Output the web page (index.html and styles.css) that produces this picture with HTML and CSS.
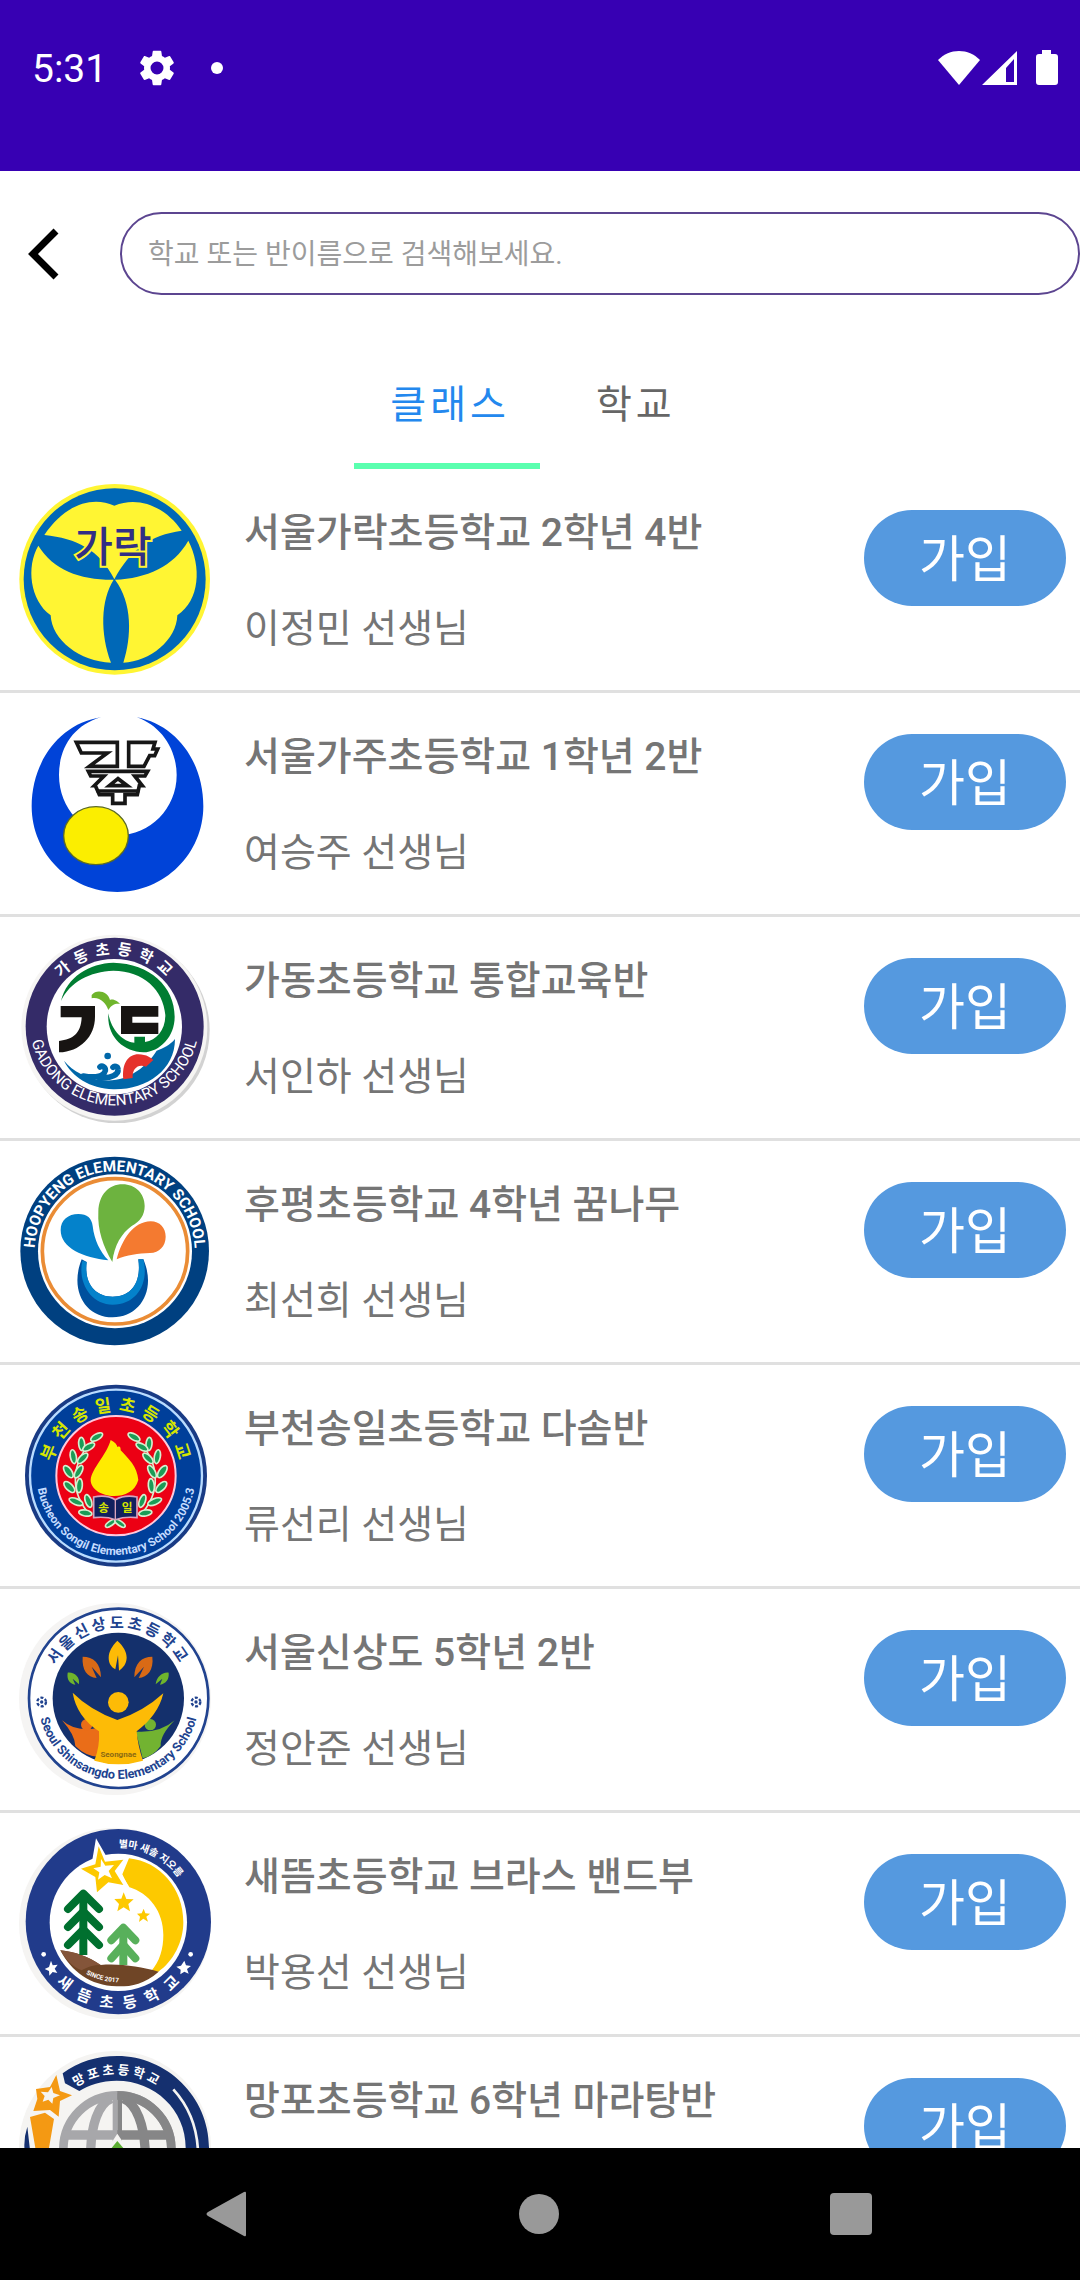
FILE: index.html
```html
<!DOCTYPE html>
<html lang="ko">
<head>
<meta charset="utf-8">
<meta name="viewport" content="width=device-width, initial-scale=1">
<title>클래스 검색</title>
<link rel="stylesheet" href="styles.css">
</head>
<body class="app">
<header class="status">
  <div class="status-group">
    <span class="clock">5:31</span>
    <svg class="gear" viewBox="2 2 20 20" aria-hidden="true"><path d="M19.14 12.94c.04-.3.06-.61.06-.94 0-.32-.02-.64-.07-.94l2.03-1.58a.49.49 0 0 0 .12-.61l-1.92-3.32a.488.488 0 0 0-.59-.22l-2.39.96c-.5-.38-1.03-.7-1.62-.94l-.36-2.54a.484.484 0 0 0-.48-.41h-3.84c-.24 0-.43.17-.47.41l-.36 2.54c-.59.24-1.13.57-1.62.94l-2.39-.96c-.22-.08-.47 0-.59.22L2.74 8.87c-.12.21-.08.47.12.61l2.03 1.58c-.05.3-.09.63-.09.94s.02.64.07.94l-2.03 1.58a.49.49 0 0 0-.12.61l1.92 3.32c.12.22.37.29.59.22l2.39-.96c.5.38 1.03.7 1.62.94l.36 2.54c.05.24.24.41.48.41h3.84c.24 0 .44-.17.47-.41l.36-2.54c.59-.24 1.13-.56 1.62-.94l2.39.96c.22.08.47 0 .59-.22l1.92-3.32c.12-.22.07-.47-.12-.61l-2.01-1.58zM12 15.6A3.6 3.6 0 1 1 12 8.400a3.600 3.600 0 0 1 0 7.200z"/></svg>
    <span class="dot"></span>
  </div>
  <div class="status-group status-right">
    <svg class="wifi" viewBox="0 0 42 36" aria-hidden="true"><path d="M21 35 0 10C6 4 13 1 21 1s15 3 21 9z"/></svg>
    <svg class="signal" viewBox="0 0 36 36" aria-hidden="true"><path fill-rule="evenodd" d="M35 1v34H0zM32 9 24 18v14h8z"/></svg>
    <svg class="battery" viewBox="0 0 22 36" aria-hidden="true"><path d="M6 0h9v4h4q3 0 3 3v25q0 3-3 3H3q-3 0-3-3V7q0-3 3-3h3z"/></svg>
  </div>
</header>

<form class="search" role="search">
  <button class="back" type="button" aria-label="뒤로"><svg viewBox="0 0 32 52" aria-hidden="true"><path d="M28 3 5 26l23 23"/></svg></button>
  <input class="search-box" type="text" aria-label="검색" placeholder="학교 또는 반이름으로 검색해보세요.">
</form>

<nav class="tabs" role="tablist">
  <button class="tab tab-on" type="button" role="tab" aria-selected="true">클래스</button>
  <button class="tab" type="button" role="tab" aria-selected="false">학교</button>
</nav>

<main class="list">
  <article class="row">
    <svg class="logo" viewBox="57 39 576 576" aria-hidden="true">
      <circle cx="344" cy="328" r="286" fill="#fff533"/>
      <circle cx="344" cy="328" r="273" fill="#0068b7"/>
      <g fill="#fff533">
        <path d="M133 195C190 110 270 75 343 107C420 75 500 115 545 182C450 195 390 240 343 328C300 240 230 205 133 195Z"/>
        <path d="M115 227C160 300 240 330 341 329C302 390 300 490 333 578C240 575 155 510 152 436C90 390 78 290 115 227Z"/>
        <path d="M565 212C520 290 440 325 345 329C398 400 395 500 370 578C450 575 530 510 532 436C600 390 605 290 565 212Z"/>
      </g>
      <text class="e-name" x="339" y="276">가락</text>
    </svg>
    <div class="info"><h2 class="title">서울가락초등학교 2학년 4반</h2><p class="teacher">이정민 선생님</p></div>
    <button class="join" type="button">가입</button>
  </article>

  <article class="row">
    <svg class="logo" viewBox="57 36 576 576" aria-hidden="true">
      <path fill="#0043d8" d="M303 67C180 85 95 200 95 334C95 476 210 591 352 591C494 591 610 476 610 334C610 200 530 90 410 67C480 90 530 160 530 240C530 340 450 421 354 421C250 421 177 340 177 240C177 160 220 90 303 67Z"/>
      <ellipse cx="288" cy="422" rx="97" ry="87" fill="#fbee00" stroke="#5c6b25" stroke-width="4"/>
      <g fill="#fff" stroke="#161616" stroke-width="11">
        <path d="M229 142H352V214H268L322 174H244Z"/>
        <path d="M386 142H465L459 162H473L464 182H449L432 214H386Z"/>
        <path d="M265 229H443L435 243H404L427 272H418L412 299H375V325H338V299H298L286 272H283L312 243H272Z"/>
        <path d="M328 272 354 251 382 272ZM290 288H418" />
      </g>
    </svg>
    <div class="info"><h2 class="title">서울가주초등학교 1학년 2반</h2><p class="teacher">여승주 선생님</p></div>
    <button class="join" type="button">가입</button>
  </article>

  <article class="row">
    <svg class="logo" viewBox="57 33 576 576" aria-hidden="true">
      <circle cx="350" cy="331" r="279" fill="#d2d2d2"/>
      <circle cx="343" cy="323" r="279" fill="#f6f5f3"/>
      <circle cx="344" cy="320" r="267" fill="#342b68"/>
      <circle cx="343" cy="320" r="203" fill="#fff"/>
      <path id="arc-gd-top" fill="none" d="M127 320A216 216 0 0 1 559 320"/>
      <path id="arc-gd-bottom" fill="none" d="M87 300A256 256 0 0 0 599 300"/>
      <text class="e-text e-46 e-bold e-wide-20 e-white"><textPath href="#arc-gd-top" startOffset="51%">가동초등학교</textPath></text>
      <text class="e-text e-46 e-white"><textPath href="#arc-gd-bottom" startOffset="50%">GADONG ELEMENTARY SCHOOL</textPath></text>
      <path fill="#007d32" d="M183 243C200 170 270 130 340 128C450 130 524 200 524 290C524 350 480 395 430 397C370 395 320 350 325 280C335 340 380 368 403 368V350H435V366C470 360 496 330 496 285C490 210 430 152 340 152C270 155 210 185 183 243Z"/>
      <path fill="#6fb52c" d="M275 225C290 205 325 215 330 240C340 235 355 245 360 252C345 250 335 255 325 270C318 250 300 230 275 235Z"/>
      <path fill="#171412" d="M182 258H285V290C285 350 240 395 177 397V363C220 358 243 340 245 292H182ZM363 258H475V290H397V308H475V342H363Z"/>
      <path fill="#0067a9" d="M525 357C525 450 440 510 340 508C270 505 215 470 192 422C220 455 258 474 305 480C380 490 440 440 470 392C490 385 510 375 525 357Z"/>
      <path fill="none" stroke="#0067a9" stroke-width="17" stroke-linecap="round" d="M250 468C290 475 312 468 316 452C317 440 306 436 300 441M296 472C335 478 356 462 354 448C353 438 343 437 339 442"/>
      <path fill="#e5322c" d="M370 478C365 430 385 403 415 403C440 403 455 415 460 420L438 440C415 430 396 445 398 474Z"/>
      <circle cx="323" cy="408" r="10" fill="#0067a9"/>
    </svg>
    <div class="info"><h2 class="title">가동초등학교 통합교육반</h2><p class="teacher">서인하 선생님</p></div>
    <button class="join" type="button">가입</button>
  </article>

  <article class="row">
    <svg class="logo" viewBox="57 45 576 576" aria-hidden="true">
      <circle cx="344" cy="333" r="283" fill="#004080"/>
      <circle cx="345" cy="334" r="231" fill="#fff"/>
      <circle cx="345" cy="334" r="218" fill="none" stroke="#ea8c35" stroke-width="11"/>
      <path id="arc-hp" fill="none" d="M104 390V334A240 240 0 0 1 584 334V390"/>
      <text class="e-text e-46 e-bold e-white"><textPath href="#arc-hp" startOffset="50%">HOOPYENG ELEMENTARY SCHOOL</textPath></text>
      <path fill="#6db33f" d="M337 366C310 320 292 270 295 215C297 165 325 133 368 133C405 133 434 160 434 198C434 225 420 245 395 258C365 280 343 315 337 366Z"/>
      <path fill="#0482cb" d="M325 361C250 352 182 325 182 270C182 240 205 222 235 222C262 222 275 235 278 258C283 300 300 335 325 361Z"/>
      <path fill="#f47a30" d="M350 358C365 300 400 245 452 244C480 244 497 264 497 290C497 318 478 338 450 339C415 340 380 345 350 358Z"/>
      <path fill="#00509d" d="M245 358L260 366C252 430 285 470 338 470C392 470 425 430 415 358H430C470 450 420 532 338 532C255 532 208 450 245 358Z"/>
      <path fill="#0482cb" d="M247 362L260 366C252 430 285 470 338 470C392 470 425 430 415 358H430C448 430 410 494 338 494C275 494 232 430 247 362Z"/>
    </svg>
    <div class="info"><h2 class="title">후평초등학교 4학년 꿈나무</h2><p class="teacher">최선희 선생님</p></div>
    <button class="join" type="button">가입</button>
  </article>

  <article class="row">
    <svg class="logo" viewBox="57 42 576 576" aria-hidden="true">
      <circle cx="348" cy="332" r="273" fill="#193b85"/>
      <circle cx="348" cy="332" r="258" fill="#003f9a" stroke="#b9dcff" stroke-width="7"/>
      <circle cx="348" cy="332" r="179" fill="#ec0014" stroke="#ffc9dc" stroke-width="6"/>
      <path id="arc-bs-top" fill="none" d="M154 380V332A194 194 0 0 1 542 332V380"/>
      <path id="arc-bs-bottom" fill="none" d="M110 300V332A238 238 0 0 0 586 332V300"/>
      <text class="e-text e-52 e-bold e-wide-20 e-lime"><textPath href="#arc-bs-top" startOffset="51%">부천송일초등학교</textPath></text>
      <text class="e-text e-35 e-bold e-sky"><textPath href="#arc-bs-bottom" startOffset="50%">Bucheon Songil Elementary School 2005.3</textPath></text>
      <g id="laurel" fill="#1b9c56" stroke="#d8efcf" stroke-width="5">
        <path fill="none" d="M300 212C215 270 205 370 262 440"/>
        <ellipse cx="290" cy="216" rx="20" ry="9" transform="rotate(-30 290 216)"/>
        <ellipse cx="245" cy="237" rx="20" ry="9" transform="rotate(-95 245 237)"/>
        <ellipse cx="266" cy="246" rx="20" ry="9" transform="rotate(-30 266 246)"/>
        <ellipse cx="220" cy="275" rx="21" ry="9" transform="rotate(-100 220 275)"/>
        <ellipse cx="248" cy="280" rx="20" ry="9" transform="rotate(-45 248 280)"/>
        <ellipse cx="205" cy="320" rx="21" ry="10" transform="rotate(55 205 320)"/>
        <ellipse cx="236" cy="320" rx="21" ry="9" transform="rotate(-60 236 320)"/>
        <ellipse cx="208" cy="366" rx="21" ry="10" transform="rotate(45 208 366)"/>
        <ellipse cx="238" cy="362" rx="21" ry="9" transform="rotate(-85 238 362)"/>
        <ellipse cx="228" cy="410" rx="22" ry="9" transform="rotate(22 228 410)"/>
        <ellipse cx="265" cy="408" rx="20" ry="9" transform="rotate(70 265 408)"/>
        <ellipse cx="256" cy="444" rx="20" ry="9" transform="rotate(10 256 444)"/>
        <ellipse cx="332" cy="475" rx="18" ry="7" transform="rotate(-35 332 475)"/>
      </g>
      <use href="#laurel" transform="matrix(-1 0 0 1 692 0)"/>
      <path fill="#ffeb00" d="M332 225C345 232 352 240 352 246C360 242 362 247 362 256C385 280 412 305 415 345C405 380 375 393 342 393C305 393 272 372 272 345C275 310 320 270 332 225Z"/>
      <path fill="#11205e" stroke="#d7a3bd" stroke-width="5" d="M281 396Q320 388 346 404Q375 388 411 396V458Q375 454 346 464Q320 454 281 458Z"/>
      <path stroke="#d7a3bd" stroke-width="4" d="M346 404V462"/>
      <text class="e-text e-35 e-bold e-lime" x="311" y="440">송</text>
      <text class="e-text e-35 e-bold e-lime" x="381" y="440">일</text>
    </svg>
    <div class="info"><h2 class="title">부천송일초등학교 다솜반</h2><p class="teacher">류선리 선생님</p></div>
    <button class="join" type="button">가입</button>
  </article>

  <article class="row">
    <svg class="logo" viewBox="57 39 576 576" aria-hidden="true">
      <circle cx="345" cy="327" r="288" fill="#f5f4f3"/>
      <circle cx="356" cy="325" r="269" fill="#fff" stroke="#21438f" stroke-width="8"/>
      <circle cx="355" cy="325" r="197" fill="#14306c"/>
      <path id="arc-ss-top" fill="none" d="M143 325A212 212 0 0 1 567 325"/>
      <path id="arc-ss-bottom" fill="none" d="M113 325A242 242 0 0 0 597 325"/>
      <text class="e-text e-46 e-bold e-wide-9 e-navy"><textPath href="#arc-ss-top" startOffset="50%">서울신상도초등학교</textPath></text>
      <text class="e-text e-38 e-bold e-navy"><textPath href="#arc-ss-bottom" startOffset="50%">Seoul Shinsangdo Elementary School</textPath></text>
      <g fill="none" stroke="#21438f" stroke-width="7" stroke-dasharray="9 5"><circle cx="125" cy="336" r="13"/><circle cx="588" cy="336" r="13"/></g>
      <g fill="#21438f"><circle cx="125" cy="336" r="5"/><circle cx="588" cy="336" r="5"/></g>
      <path fill="#fdbb06" d="M352 152C370 168 380 185 380 203C379 222 370 232 357 242L354 196L346 238C332 230 326 218 326 203C326 185 336 168 352 152Z"/>
      <path fill="#d96a16" d="M248 200C280 200 303 220 303 262L275 230L290 264C262 262 245 240 248 200ZM457 200C425 200 403 220 403 262L432 230L416 264C442 262 462 240 457 200Z"/>
      <path fill="#6fb52c" d="M203 248C225 246 240 262 237 283L218 266L226 284C208 280 200 268 203 248ZM506 248C485 246 470 262 467 283L487 266L480 284C498 280 508 268 506 248Z"/>
      <path fill="#ea6d18" d="M186 391Q230 430 300 412V500Q260 502 226 468Q225 435 186 391Z"/>
      <circle cx="260" cy="404" r="17" fill="#ea6d18"/>
      <path fill="#72b331" d="M524 391Q480 430 408 425L428 505Q460 498 482 468Q480 435 524 391Z"/>
      <circle cx="451" cy="404" r="17" fill="#72b331"/>
      <path fill="#fdbb06" d="M218 308Q270 360 352 390Q430 365 490 310Q475 375 410 424Q414 470 429 512Q355 534 283 512Q300 470 297 424Q230 380 218 308Z"/>
      <circle cx="355" cy="337" r="31" fill="#fdbb06"/>
      <text class="e-text e-24 e-bold e-olive" x="355" y="500">Seongnae</text>
    </svg>
    <div class="info"><h2 class="title">서울신상도 5학년 2반</h2><p class="teacher">정안준 선생님</p></div>
    <button class="join" type="button">가입</button>
  </article>

  <article class="row">
    <svg class="logo" viewBox="57 36 576 576" aria-hidden="true">
      <circle cx="345" cy="326" r="288" fill="#f5f4f2"/>
      <circle cx="355" cy="320" r="278" fill="#213b8b"/>
      <circle cx="355" cy="322" r="206" fill="#fff"/>
      <path fill="#fdc900" d="M387 130C480 140 550 220 550 322C550 380 520 440 475 470H452C480 440 490 400 490 360C490 290 450 235 385 215L367 178Z"/>
      <path fill="#6f4526" d="M181 406C225 410 265 425 302 450C360 445 420 455 476 470C430 510 390 515 350 514C270 512 215 470 181 406Z"/>
      <path fill="#84553a" d="M181 406C225 410 265 425 302 450C280 450 265 455 245 466C215 455 195 430 181 406Z"/>
      <path fill="#fff" d="M288 70 319 124 376 118 357 166 388 216 330 213 288 240 277 190 230 160 276 140Z"/>
      <path fill="#fdc900" d="M296 94 315 140 370 134 344 168 370 210 325 202 291 232 286 186 243 161 286 148Z"/>
      <path fill="#fff" d="M303 132 316 152 342 150 326 168 336 190 314 180 294 194 298 172 280 160 302 155Z"/>
      <path fill="#fdc900" d="m371 232 8 20 22 1-16 14 5 22-19-12-19 12 5-22-14-15 21-1zM431 281l5 14 14 1-11 9 5 15-14-9-13 10 3-16-9-9 14-1z"/>
      <g fill="none" stroke="#00702f" stroke-width="24" stroke-linecap="round" stroke-linejoin="round"><path d="M204 282 250 236 297 282M204 336 250 290 297 336M204 390 250 344 297 390"/><path stroke-linecap="butt" d="M250 240V420"/></g>
      <g fill="none" stroke="#58b05b" stroke-width="24" stroke-linecap="round" stroke-linejoin="round"><path d="M334 376 370 338 406 376M334 430 370 390 406 430"/><path stroke-linecap="butt" d="M370 340V450"/></g>
      <path id="arc-st-top" fill="none" d="M132 320A223 223 0 0 1 578 320"/>
      <path id="arc-st-bottom" fill="none" d="M95 320A260 260 0 0 0 615 320"/>
      <path id="arc-st-year" fill="none" d="M255 475Q305 502 360 502"/>
      <text class="e-text e-30 e-bold e-white"><textPath href="#arc-st-top" startOffset="65%">별마 새솔 지오름</textPath></text>
      <text class="e-text e-46 e-bold e-wide-32 e-white"><textPath href="#arc-st-bottom" startOffset="52%">새뜸초등학교</textPath></text>
      <text class="e-text e-19 e-bold e-white"><textPath href="#arc-st-year" startOffset="50%">SINCE 2017</textPath></text>
      <path fill="#fff" d="m153 437 5 14 15-2-9 12 8 13-14-3-10 11-1-14-13-6 13-6zM553 437l5 14 15 2-12 9 5 14-13-6-12 8 1-14-13-9 14-3z"/>
      <circle cx="131" cy="418" r="7" fill="#fff"/><circle cx="572" cy="418" r="7" fill="#fff"/>
    </svg>
    <div class="info"><h2 class="title">새뜸초등학교 브라스 밴드부</h2><p class="teacher">박용선 선생님</p></div>
    <button class="join" type="button">가입</button>
  </article>

  <article class="row">
    <svg class="logo" viewBox="57 48 576 576" aria-hidden="true">
      <circle cx="345" cy="336" r="288" fill="#f5f4f2"/>
      <path fill="#15306f" d="M188 115C235 80 290 63 352 63C500 63 627 185 627 338C627 470 540 570 430 602V545C510 510 557 430 557 338C557 225 465 137 350 137C305 137 265 150 238 168L195 145ZM82 275Q70 310 74 350L90 345Z"/>
      <path fill="none" stroke="#f5f4f2" stroke-width="8" d="M520 163Q590 240 594 350"/>
      <path fill="#f49913" d="M169 120 180 168 216 181 180 198 176 245 150 225 100 228 112 192 108 162 150 156ZM90 246 135 233 162 252 145 350H108Z"/>
      <path fill="#f5f4f2" d="M155 156 160 174 180 181 160 189 157 206 145 194 128 200 134 183 122 170 144 172Z"/>
      <circle cx="352" cy="343" r="162" fill="none" stroke="#a7a7aa" stroke-width="26"/>
      <path fill="none" stroke="#a7a7aa" stroke-width="28" d="M335 190C295 205 272 270 272 360M190 300H352"/>
      <path fill="none" stroke="#868687" stroke-width="26" d="M352 181A162 162 0 0 1 352 505"/>
      <path fill="none" stroke="#868687" stroke-width="28" d="M369 190C409 205 434 270 436 360M352 300H515"/>
      <path fill="#a7a7aa" d="M338 175H352V320H338Z"/><path fill="#868687" d="M352 175H366V320H352Z"/>
      <path fill="#f5f4f2" d="M352 296 385 345H320Z"/>
      <path fill="#5cad32" d="M352 318 375 345H330Z"/>
      <path id="arc-mp" fill="none" d="M132 338A220 220 0 0 1 572 338"/>
      <text class="e-text e-38 e-bold e-wide-9 e-white"><textPath href="#arc-mp" startOffset="50%">망포초등학교</textPath></text>
    </svg>
    <div class="info"><h2 class="title">망포초등학교 6학년 마라탕반</h2></div>
    <button class="join" type="button">가입</button>
  </article>
</main>

<footer class="system">
  <button class="key" type="button" aria-label="뒤로 가기"><svg viewBox="0 0 48 48" aria-hidden="true"><path d="M43 3v42q0 2-2 1L5 26q-3-2 0-4L41 2q2-1 2 1z"/></svg></button>
  <button class="key" type="button" aria-label="홈"><svg viewBox="0 0 48 48" aria-hidden="true"><circle cx="24" cy="24" r="20"/></svg></button>
  <button class="key" type="button" aria-label="최근 앱"><svg viewBox="0 0 48 48" aria-hidden="true"><rect x="3" y="3" width="42" height="42" rx="4"/></svg></button>
</footer>
</body>
</html>
```
FILE: styles.css
```css
* { box-sizing: border-box; }

.app {
  margin: 0;
  height: 100vh;
  display: flex;
  flex-direction: column;
  background: #fff;
  color: #757575;
  font-family: Roboto, "Noto Sans CJK KR", sans-serif;
}

button, input { font-family: inherit; margin: 0; }
button { border: 0; padding: 0; background: none; }

/* status bar */
.status {
  flex: none;
  display: flex;
  justify-content: space-between;
  align-items: flex-start;
  height: 171px;
  padding: 44px 22px 0 32px;
  background: #3700b3;
  color: #fff;
}
.status svg { fill: #fff; }
.status-group { display: flex; align-items: center; height: 48px; }
.clock { padding-top: 2px; font-size: 39px; line-height: 48px; }
.gear { width: 36px; height: 36px; margin-left: 32px; }
.dot { width: 12px; height: 12px; margin-left: 36px; border-radius: 50%; background: #fff; }
.wifi { width: 42px; height: 36px; }
.signal { width: 36px; height: 36px; margin-left: 2px; }
.battery { width: 22px; height: 36px; margin-left: 18px; }

/* search */
.search { flex: none; display: flex; align-items: center; padding: 41px 0 42px; }
.back { width: 120px; height: 83px; padding-left: 28px; display: flex; align-items: center; }
.back svg { width: 32px; height: 52px; fill: none; stroke: #000; stroke-width: 7px; }
.search-box {
  flex: 1;
  min-width: 0;
  height: 83px;
  padding: 2px 26px 0;
  border: 2px solid #5c4590;
  border-radius: 42px;
  background: #fff;
  color: #333;
  font-size: 28px;
}
.search-box::placeholder { color: #9c9c9c; opacity: 1; }

/* tabs */
.tabs { flex: none; align-self: center; display: grid; grid-template-columns: 1fr 1fr; }
.tab {
  height: 132px;
  padding: 0 30px 4px 36px;
  border-top: 6px solid transparent;
  border-bottom: 6px solid transparent;
  color: #666;
  font-size: 39px;
  letter-spacing: 4px;
}
.tab-on { color: #2388ee; border-bottom-color: #5affaf; }

/* class list */
.list { flex: 1; min-height: 0; overflow-y: auto; scrollbar-width: none; }
.row {
  display: flex;
  align-items: flex-start;
  padding: 14px 14px 15px 19px;
  border-bottom: 3px solid #e0e0e0;
}
.logo { flex: none; width: 192px; height: 192px; }
.info { flex: 1; min-width: 0; padding: 22px 0 0 33px; }
.title, .teacher { margin: 0; font-size: 39px; line-height: 56px; white-space: nowrap; }
.title { font-weight: 500; }
.teacher { margin-top: 40px; }
.join {
  flex: none;
  width: 202px;
  height: 96px;
  margin-top: 27px;
  padding-bottom: 6px;
  border-radius: 48px;
  background: #5599df;
  color: #fff;
  font-size: 50px;
}

/* emblem lettering */
.e-name {
  font-size: 126px;
  font-weight: 500;
  text-anchor: middle;
  fill: #322e85;
  stroke: #fff533;
  stroke-width: 12px;
  paint-order: stroke;
}
.e-text { text-anchor: middle; }
.e-19 { font-size: 19px; }
.e-24 { font-size: 24px; }
.e-30 { font-size: 30px; }
.e-35 { font-size: 35px; }
.e-38 { font-size: 38px; }
.e-46 { font-size: 46px; }
.e-52 { font-size: 52px; }
.e-bold { font-weight: 700; }
.e-wide-9 { letter-spacing: 9px; }
.e-wide-20 { letter-spacing: 20px; }
.e-wide-32 { letter-spacing: 32px; }
.e-white { fill: #fff; }
.e-lime { fill: #d6e600; }
.e-sky { fill: #c5dcff; }
.e-navy { fill: #21438f; }
.e-olive { fill: #8a6a14; }

/* system navigation */
.system {
  flex: none;
  display: flex;
  justify-content: space-between;
  align-items: center;
  height: 132px;
  padding: 0 205px 0 203px;
  background: #000;
}
.key { display: flex; }
.key svg { width: 48px; height: 48px; fill: #999; }
```
